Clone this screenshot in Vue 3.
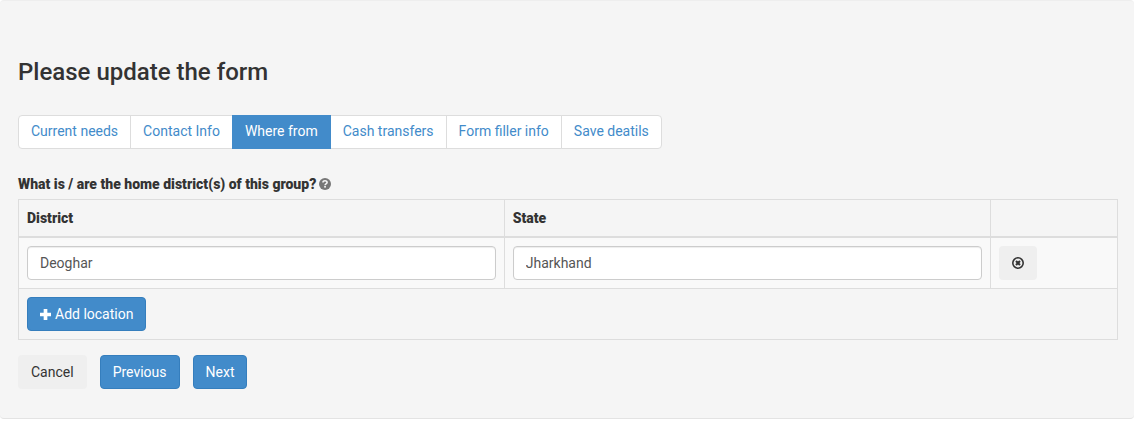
<script setup>
import { ref } from 'vue'

const steps = ['Current needs', 'Contact Info', 'Where from', 'Cash transfers', 'Form filler info', 'Save deatils']
const current = ref(2)
const locations = ref([{ id: 1, district: 'Deoghar', state: 'Jharkhand' }])
let nextId = 2

function addLocation() {
  locations.value.push({ id: nextId++, district: '', state: '' })
}
function removeLocation(index) {
  locations.value.splice(index, 1)
}
function move(delta) {
  current.value = Math.min(steps.length - 1, Math.max(0, current.value + delta))
}
</script>

<template>
  <main class="well">
    <h3 class="title">Please update the form</h3>
    <nav class="steps">
      <a
        v-for="(step, i) in steps"
        :key="step"
        href="#"
        class="step"
        :class="{ active: i === current }"
        @click.prevent="current = i"
      >{{ step }}</a>
    </nav>

    <form @submit.prevent>
      <div id="districts-label" class="question">
        <span>What is / are the home district(s) of this group?</span>
        <svg class="help" viewBox="0 0 12 12" aria-hidden="true">
          <circle cx="6" cy="6" r="6" fill="#777" />
          <path d="M4 4.6C4 3.3 4.8 2.7 6 2.7s2.1.7 2.1 1.8c0 1.4-2 1.4-2 2.7" fill="none" stroke="#f5f5f5" stroke-width="1.6" />
          <rect x="5.2" y="8" width="1.7" height="1.6" fill="#f5f5f5" />
        </svg>
      </div>
      <table class="grid" aria-labelledby="districts-label">
        <colgroup>
          <col class="wide" />
          <col class="wide" />
          <col />
        </colgroup>
        <thead>
          <tr><th>District</th><th>State</th><th></th></tr>
        </thead>
        <tbody>
          <tr v-for="(loc, i) in locations" :key="loc.id">
            <td><input v-model="loc.district" type="text" class="control" aria-label="District" /></td>
            <td><input v-model="loc.state" type="text" class="control" aria-label="State" /></td>
            <td>
              <button type="button" class="btn plain" aria-label="Remove location" @click="removeLocation(i)">
                <svg class="remove" viewBox="0 0 12 12" aria-hidden="true">
                  <circle cx="6" cy="6" r="5.2" fill="none" stroke="#333" stroke-width="1.6" />
                  <path d="M4 4l4 4M8 4l-4 4" stroke="#333" stroke-width="2.1" />
                </svg>
              </button>
            </td>
          </tr>
        </tbody>
        <tfoot>
          <tr>
            <td colspan="3">
              <button type="button" class="btn primary" @click="addLocation">
                <svg class="plus" viewBox="0 0 12 12" aria-hidden="true">
                  <path d="M4 0h4v4h4v4H8v4H4V8H0V4h4z" fill="#fff" />
                </svg>
                <span>Add location</span>
              </button>
            </td>
          </tr>
        </tfoot>
      </table>
      <div class="actions">
        <button type="button" class="btn plain">Cancel</button>
        <button type="button" class="btn primary" @click="move(-1)">Previous</button>
        <button type="button" class="btn primary" @click="move(1)">Next</button>
      </div>
    </form>
  </main>
</template>

<style>
body {
  background: #fff;
}
</style>

<style scoped>
.well {
  box-sizing: border-box;
  padding: 58px 16px 29px 18px;
  border: solid #e3e3e3;
  border-width: 1px 0;
  border-top-color: #eee;
  border-radius: 4px;
  background: #f5f5f5;
  color: #333;
  font: 14px/20px Roboto, "Liberation Sans", sans-serif;
}
.title {
  margin: 0 0 30px;
  font-size: 24px;
  font-weight: 500;
  line-height: 26px;
}
.steps {
  display: flex;
  margin-bottom: 25px;
}
.step {
  padding: 5px 12px 7px;
  border: 1px solid #ddd;
  margin-left: -1px;
  background: #fff;
  color: #428bca;
  text-decoration: none;
}
.step:first-child {
  margin-left: 0;
  border-radius: 4px 0 0 4px;
}
.step:last-child {
  border-radius: 0 4px 4px 0;
}
.step.active {
  z-index: 1;
  background: #428bca;
  border-color: #428bca;
  color: #fff;
}
.question {
  display: flex;
  align-items: center;
  gap: 3px;
  margin-bottom: 5px;
  font-weight: 900;
}
.help {
  width: 12px;
  height: 12px;
}
.plus {
  width: 11px;
  height: 11px;
}
.grid {
  width: 100%;
  table-layout: fixed;
  border-collapse: collapse;
  border: 1px solid #ddd;
}
.wide {
  width: 44.2%;
}
.grid th,
.grid td {
  padding: 8px;
  border: 1px solid #ddd;
  text-align: left;
  vertical-align: top;
}
.grid th {
  border-bottom-width: 2px;
  font-weight: 900;
}
.grid tbody td {
  background: #f9f9f9;
}
.control {
  display: block;
  box-sizing: border-box;
  width: 100%;
  height: 34px;
  padding: 6px 12px;
  border: 1px solid #ccc;
  border-radius: 4px;
  background: #fff;
  box-shadow: inset 0 1px 1px rgba(0, 0, 0, 0.075);
  color: #555;
  font: inherit;
}
.btn {
  display: flex;
  align-items: center;
  gap: 4px;
  height: 34px;
  padding: 6px 12px;
  border: 1px solid transparent;
  border-radius: 4px;
  font: inherit;
  cursor: pointer;
}
.plain {
  background: #efefef;
  color: #333;
}
.primary {
  background: #428bca;
  border-color: #357ebd;
  color: #fff;
}
.remove {
  width: 12px;
  height: 12px;
}
.actions {
  display: flex;
  gap: 13px;
  margin-top: 15px;
}
</style>
